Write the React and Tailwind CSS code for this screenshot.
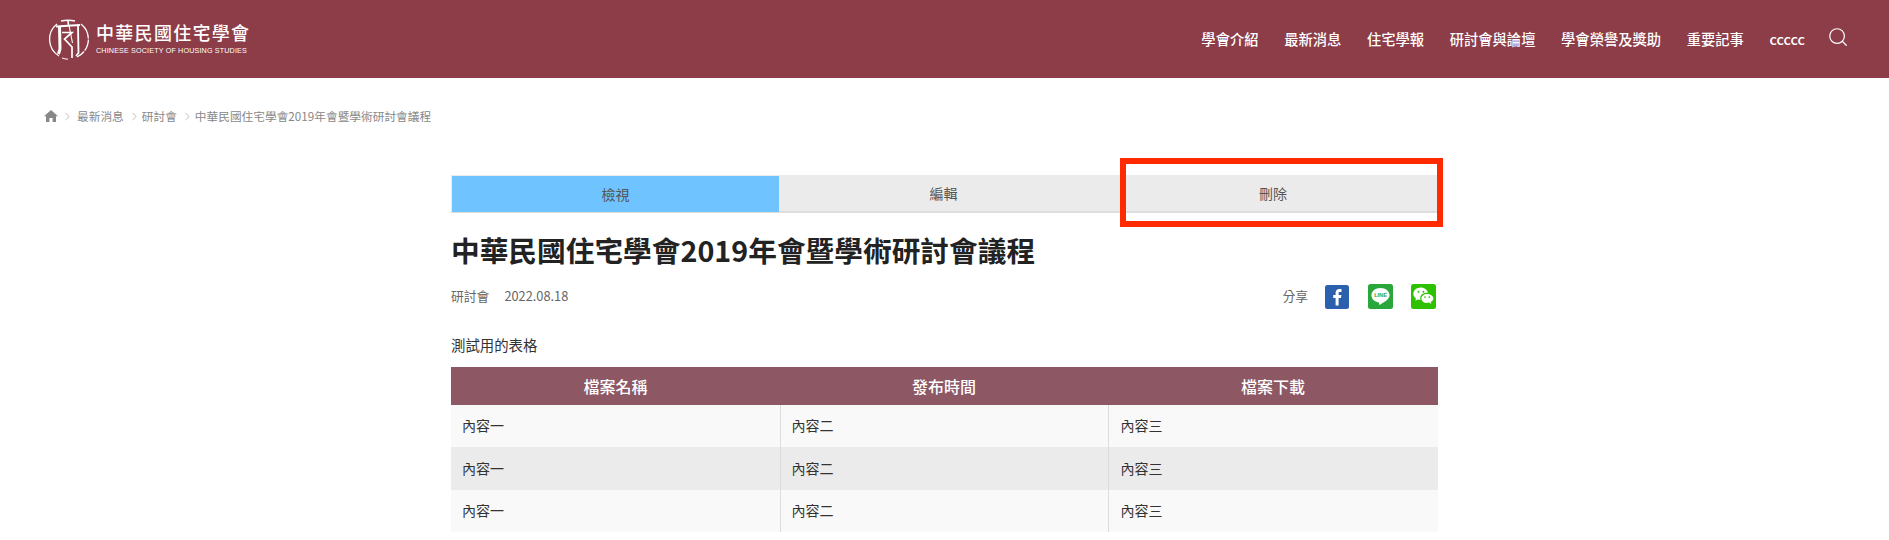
import { Search, ChevronRight } from "lucide-react";

const cjk = { fontFamily: '"Noto Sans CJK TC", sans-serif' };

const navItems = ["學會介紹", "最新消息", "住宅學報", "研討會與論壇", "學會榮譽及獎助", "重要記事", "ccccc"];
const rows = [
  { id: 1, bg: "bg-[#f9f9f9]" },
  { id: 2, bg: "bg-[#ebebeb]" },
  { id: 3, bg: "bg-[#f9f9f9]" },
];

function Logo() {
  return (
    <svg width="41" height="41" viewBox="0 0 41 41" fill="none" stroke="#fff" className="shrink-0">
      {/* broken seal ring */}
      <path d="M9 5 A19.5 19.5 0 0 0 11 37" strokeWidth="1.3" />
      <path d="M14 39 A19.5 19.5 0 0 0 20 40.2" strokeWidth="1" />
      <path d="M29 38 A19.5 19.5 0 0 0 33 5" strokeWidth="1.3" strokeDasharray="9 1 12 1 20" />
      {/* seal glyph */}
      <path d="M13 2 Q20 0.5 27 2" strokeWidth="1.5" />
      <path d="M20 2 L20.5 6" strokeWidth="1.6" />
      <path d="M8 7.5 L32 6" strokeWidth="1.8" />
      <path d="M11.5 7 L12 30 L10.5 35" strokeWidth="3" />
      <path d="M30 6 L30.5 34 L28 37" strokeWidth="1.8" />
      <path d="M14 13.5 H24 L16.5 20 L24 28 V39" strokeWidth="1.7" />
      <path d="M21 6.5 L24.5 24" strokeWidth="1.1" />
    </svg>
  );
}

function HomeIcon() {
  return (
    <svg width="14" height="12" viewBox="0 0 14 12" fill="#888" className="shrink-0">
      <path d="M7 0 L14 6.2 H12 V12 H8.6 V8 H5.4 V12 H2 V6.2 H0 Z" />
    </svg>
  );
}

function Crumb({ children, className }) {
  return (
    <>
      <ChevronRight size={13} strokeWidth={1} className={`shrink-0 text-[#888] ${className}`} />
      <span>{children}</span>
    </>
  );
}

function FacebookIcon() {
  return (
    <svg width="24" height="24" viewBox="0 0 24 24">
      <rect width="24" height="24" rx="2.5" fill="#2a60ac" />
      <path fill="#fff" d="M13.6 20.5 V13 H16 L16.4 10 H13.6 V8.3 C13.6 7.4 13.9 6.9 15 6.9 H16.5 V4.2 C16.1 4.15 15.3 4.1 14.4 4.1 C12.2 4.1 10.6 5.4 10.6 7.9 V10 H8.2 V13 H10.6 V20.5 Z" />
    </svg>
  );
}

function LineIcon() {
  return (
    <svg width="25" height="25" viewBox="0 0 25 25">
      <rect width="25" height="25" rx="2.5" fill="#2aa73a" />
      <path fill="#fff" d="M12.5 4 C7.3 4 3.4 7.2 3.4 11.3 C3.4 15 6.5 17.7 10.6 18.4 C11.3 18.6 11.1 19.3 11 20 C10.9 20.8 11.5 20.8 12.3 20.4 C14.5 19.3 21.6 15.6 21.6 11.3 C21.6 7.2 17.7 4 12.5 4 Z" />
      <text x="12.5" y="13.2" textAnchor="middle" fontSize="5.6" fontWeight="700" fill="#2aa73a" fontFamily="Liberation Sans, sans-serif">LINE</text>
    </svg>
  );
}

function WechatIcon() {
  return (
    <svg width="25" height="25" viewBox="0 0 25 25">
      <rect width="25" height="25" rx="2.5" fill="#2dc100" />
      <path fill="#fff" d="M10 3.6 C5.6 3.6 2.4 6.4 2.4 9.8 C2.4 11.8 3.4 13.3 5 14.5 L4.3 16.7 L6.9 15.4 C7.8 15.7 8.6 15.8 9.5 15.9 C9.3 15.3 9.2 14.8 9.2 14.2 C9.2 11.2 12 8.8 15.7 8.8 C16.1 8.8 16.6 8.8 17 8.9 C16.2 5.9 13.4 3.6 10 3.6 Z" />
      <path fill="#fff" d="M16 9.9 C12.9 9.9 10.4 11.9 10.4 14.4 C10.4 16.9 12.9 18.9 16 18.9 C16.7 18.9 17.4 18.8 18 18.6 L20.3 19.9 L19.7 18 C21.2 17 22.4 15.8 22.4 14.4 C22.4 11.9 19.1 9.9 16 9.9 Z" />
      <circle cx="7.5" cy="7.7" r="1" fill="#2dc100" />
      <circle cx="12.4" cy="7.7" r="1" fill="#2dc100" />
      <circle cx="14" cy="13" r="0.85" fill="#2dc100" />
      <circle cx="18.3" cy="13" r="0.85" fill="#2dc100" />
    </svg>
  );
}

export default function App() {
  return (
    <div className="min-h-[540px] bg-white text-[#333]" style={cjk}>
      {/* Header */}
      <header className="flex h-[78px] items-center justify-between bg-[#8c3d48] pl-12 pr-[40px] text-white">
        <div className="flex items-center gap-[7px]">
          <Logo />
          <div className="-mt-[2px] flex flex-col">
            <span className="text-[18px] font-medium leading-[22px] tracking-[1.3px]">中華民國住宅學會</span>
            <span className="mt-[3px] text-[7.2px] leading-[9px] tracking-[0.02em]" style={{ fontFamily: '"Liberation Sans", sans-serif' }}>
              CHINESE SOCIETY OF HOUSING STUDIES
            </span>
          </div>
        </div>
        <nav className="flex items-center gap-[25.6px] text-[14.3px] font-medium">
          {navItems.map((item) => (
            <a key={item} className="leading-5">{item}</a>
          ))}
          <Search size={22} strokeWidth={1.3} className="-ml-[3.6px] -mt-[4px]" />
        </nav>
      </header>

      {/* Breadcrumb */}
      <div className="mt-[28px] flex h-[20px] items-center pl-11 text-[11.7px] text-[#888]">
        <HomeIcon />
        <Crumb className="mx-[3px]">最新消息</Crumb>
        <Crumb className="ml-[4px] mr-[1px]">研討會</Crumb>
        <Crumb className="ml-[4px] mr-[1px]">中華民國住宅學會2019年會暨學術研討會議程</Crumb>
      </div>

      <main className="relative mx-auto mt-[49px] w-[987px]">
        {/* Tabs */}
        <div className="grid h-[38px] grid-cols-[328px_329px_330px] border-b-2 border-[#ddd] bg-[#ebebeb] text-center text-sm leading-[36px] text-[#555]">
          <div className="ml-px mt-px bg-[#6fc3ff]">檢視</div>
          <div>編輯</div>
          <div>刪除</div>
        </div>
        <div className="absolute left-[669px] top-[-17px] h-[69px] w-[323px] border-[6px] border-[#ff2a00]" />

        <h1 className="mt-[17px] text-[28.7px] font-bold leading-[40px] text-[#222]">中華民國住宅學會2019年會暨學術研討會議程</h1>

        {/* Meta and share */}
        <div className="mt-[14px] flex h-[25px] items-center justify-between text-[12.8px] text-[#666]">
          <div className="-mt-[2px] flex gap-[15px]">
            <span>研討會</span>
            <span>2022.08.18</span>
          </div>
          <div className="flex items-center pr-[2px]">
            <span className="-mt-[2px] mr-[17px]">分享</span>
            <FacebookIcon />
            <span className="ml-[19px]"><LineIcon /></span>
            <span className="ml-[18px]"><WechatIcon /></span>
          </div>
        </div>

        <p className="mt-[26px] text-[14.4px] leading-[20px]">測試用的表格</p>

        {/* Table */}
        <table className="mt-[12px] w-full table-fixed border-collapse text-sm">
          <colgroup>
            <col className="w-[329px]" />
            <col className="w-[328px]" />
            <col className="w-[330px]" />
          </colgroup>
          <thead>
            <tr className="h-[38px] bg-[#8d5764] text-center text-base font-medium text-white">
              <th className="font-medium">檔案名稱</th>
              <th className="font-medium">發布時間</th>
              <th className="font-medium">檔案下載</th>
            </tr>
          </thead>
          <tbody>
            {rows.map((row) => (
              <tr key={row.id} className={`h-[42.4px] ${row.bg}`}>
                <td className="pb-[2px] pl-[11px]">內容一</td>
                <td className="border-l border-[#ddd] pb-[2px] pl-[11px]">內容二</td>
                <td className="border-l border-[#ddd] pb-[2px] pl-3">內容三</td>
              </tr>
            ))}
          </tbody>
        </table>
      </main>
    </div>
  );
}
